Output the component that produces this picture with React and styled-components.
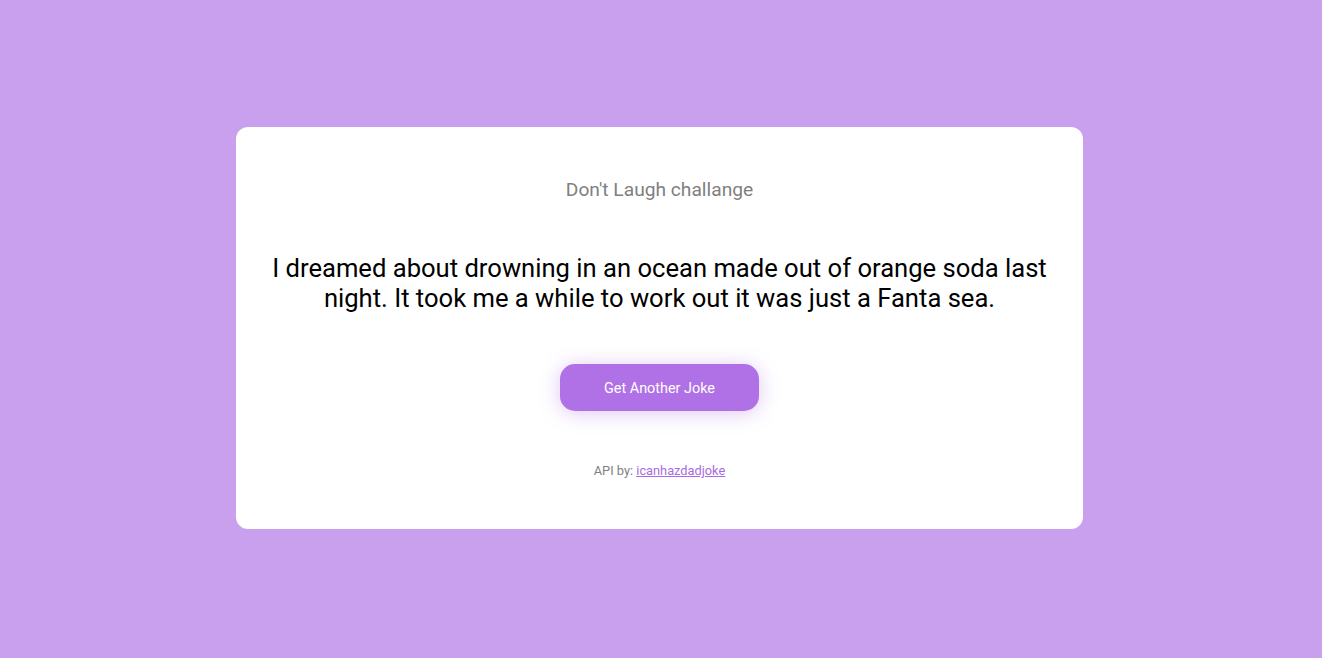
import React from "react";
import styled, { createGlobalStyle } from "styled-components";

const GlobalStyle = createGlobalStyle`
  html, body {
    margin: 0;
    padding: 0;
  }
  body {
    font-family: Roboto, "Liberation Sans", sans-serif;
    background-color: #c8a0ee;
  }
`;

// Page wrapper
const Page = styled.div`
  min-height: 100vh;
  display: flex;
  align-items: center;
  justify-content: center;
  padding-right: 3px;
  box-sizing: border-box;
`;

// White card
const Card = styled.div`
  box-sizing: border-box;
  width: 847px;
  background-color: #fff;
  border-radius: 12px;
  padding: 52px 30px 51px;
  margin-bottom: 2px;
  display: flex;
  flex-direction: column;
  align-items: center;
  text-align: center;
`;

const Title = styled.h3`
  margin: 0;
  font-size: 1.2rem;
  font-weight: 400;
  line-height: 22px;
  color: #808080;
`;

const Joke = styled.div`
  margin: 52px 0 51px;
  font-size: 1.6rem;
  line-height: 30px;
  color: #000;
`;

const Button = styled.button`
  width: 199px;
  height: 47px;
  padding: 2px 0 0;
  border: none;
  border-radius: 15px;
  background-color: #b070e6;
  color: #fff;
  font-family: inherit;
  font-size: 0.9rem;
  cursor: pointer;
  box-shadow: 0 2px 20px rgba(176, 112, 230, 0.4);
`;

const Footer = styled.p`
  margin: 52px 0 0;
  font-size: 0.8rem;
  line-height: 15px;
  color: #808080;

  a {
    color: #a66de0;
  }
`;

const App = () => {
  return (
    <>
      <GlobalStyle />
      <Page>
        <Card>
          <Title>Don't Laugh challange</Title>
          <Joke>
            I dreamed about drowning in an ocean made out of orange soda last
            night. It took me a while to work out it was just a Fanta sea.
          </Joke>
          <Button type="button">Get Another Joke</Button>
          <Footer>
            API by: <a href="#">icanhazdadjoke</a>
          </Footer>
        </Card>
      </Page>
    </>
  );
};

export default App;
